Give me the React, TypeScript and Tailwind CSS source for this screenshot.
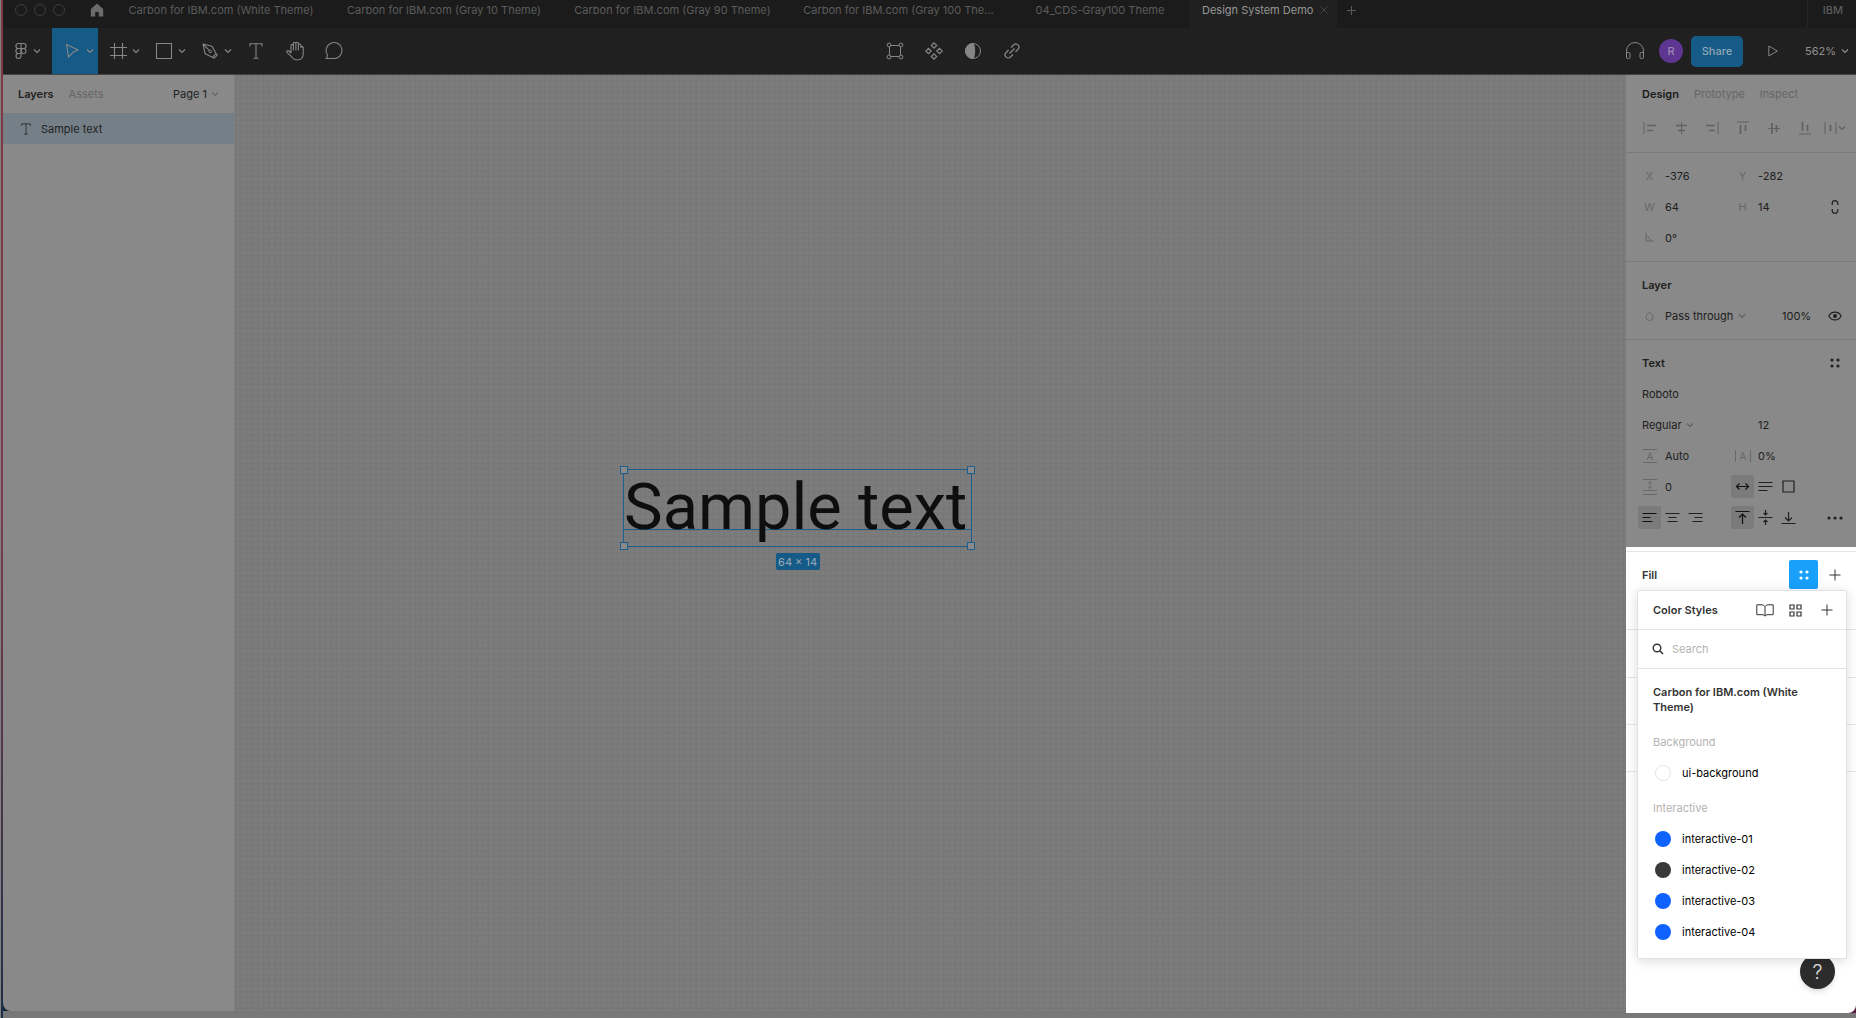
import React, { useState } from "react";

type GlyphProps = { w?: number; h?: number; className?: string; children: React.ReactNode };

function Glyph({ w = 24, h = 24, className = "", children }: GlyphProps) {
  return (
    <svg
      width={w}
      height={h}
      viewBox={`0 0 ${w} ${h}`}
      fill="none"
      stroke="currentColor"
      strokeWidth="1"
      aria-hidden="true"
      className={`shrink-0 ${className}`}
    >
      {children}
    </svg>
  );
}

const Chevron = ({ className = "" }: { className?: string }) => (
  <Glyph w={8} h={6} className={className}>
    <path d="M1 1.5 4 4.5 7 1.5" strokeWidth="1.2" />
  </Glyph>
);

const Plus = ({ className = "" }: { className?: string }) => (
  <Glyph w={12} h={12} className={className}>
    <path d="M6 .5v11M.5 6h11" />
  </Glyph>
);

const FourDots = () => (
  <Glyph w={12} h={12}>
    <g fill="currentColor" stroke="none">
      <circle cx="3" cy="3" r="1.6" />
      <circle cx="9" cy="3" r="1.6" />
      <circle cx="3" cy="9" r="1.6" />
      <circle cx="9" cy="9" r="1.6" />
    </g>
  </Glyph>
);

const TypeIcon = ({ s = 14 }: { s?: number }) => (
  <svg width={s} height={s + 2} viewBox="0 0 14 16" fill="none" stroke="currentColor" aria-hidden="true" className="shrink-0">
    <path d="M1 3.5V.8h12v2.7M7 .8v14.4M4.5 15.2h5" strokeWidth="1.1" />
  </svg>
);

const tabs = [
  { name: "Carbon for IBM.com (White Theme)", box: "w-[218px]" },
  { name: "Carbon for IBM.com (Gray 10 Theme)", box: "w-[228px]" },
  { name: "Carbon for IBM.com (Gray 90 Theme)", box: "w-[229px]" },
  { name: "Carbon for IBM.com (Gray 100 The...", box: "w-[223px]" },
  { name: "04_CDS-Gray100 Theme", box: "w-[180px]" },
];

function TabBar() {
  return (
    <header className="flex h-7 shrink-0 items-start overflow-hidden bg-[#1b1b1b] pl-3 text-[#5c5c5c]">
      <div className="flex h-5 items-center gap-[7px]">
        <button aria-label="Close window" className="size-3 rounded-full border border-[#3d3d3d]" />
        <button aria-label="Minimise window" className="size-3 rounded-full border border-[#3d3d3d]" />
        <button aria-label="Zoom window" className="size-3 rounded-full border border-[#3d3d3d]" />
      </div>
      <button aria-label="Home" className="ml-6 flex h-5 w-4 items-center justify-center text-[#6b6b6b]">
        <Glyph w={14} h={14}>
          <path d="M7 .5 .8 6v7.5h4.4V9h3.6v4.5h4.4V6Z" fill="currentColor" stroke="none" />
        </Glyph>
      </button>
      <nav className="ml-[7px] flex min-w-0" aria-label="Open files">
        {tabs.map((t) => (
          <button key={t.name} className={`h-5 truncate text-center whitespace-nowrap ${t.box}`}>
            {t.name}
          </button>
        ))}
        <div className="flex h-7 w-[147px] items-start bg-[#202020] pr-[3px] pl-3">
          <button className="h-5 flex-1 text-left whitespace-nowrap text-[#969696]">Design System Demo</button>
          <button aria-label="Close tab" className="flex size-5 items-center justify-center text-[#444444]">
            <Glyph w={8} h={8}>
              <path d="M.5 .5l7 7M7.5 .5l-7 7" />
            </Glyph>
          </button>
        </div>
        <button aria-label="New tab" className="ml-1 flex size-5 items-center justify-center text-[#5a5a5a]">
          <Glyph w={9} h={9}>
            <path d="M4.5 0v9M0 4.5h9" />
          </Glyph>
        </button>
      </nav>
      <button className="ml-auto h-7 border-l border-[#242424] pr-[13px] pb-2 pl-[15px] font-medium">IBM</button>
    </header>
  );
}

type ToolProps = { label: string; active?: boolean; menu?: boolean; box?: string; children: React.ReactNode };

function Tool({ label, active, menu = true, box, children }: ToolProps) {
  const size = box ?? (menu ? "w-[46px] justify-center gap-[2px] pl-1" : "w-[39px] justify-center");
  return (
    <button aria-label={label} className={`flex h-full items-center ${size} ${active ? "bg-[#165a87]" : ""}`}>
      {children}
      {menu && <Chevron />}
    </button>
  );
}

function Toolbar() {
  return (
    <div className="flex h-[46px] shrink-0 items-center bg-[#202020] text-[#868686]">
      <div className="flex h-full pl-[3px]">
        <Tool label="Main menu" box="w-[46px] pl-[3px]">
          <Glyph w={24}>
            <g strokeWidth="1.1">
              <path d="M12 4.500H9.400a2.500 2.500 0 0 0 0 5H12ZM12 9.500H9.400a2.500 2.500 0 0 0 0 5H12ZM12 4.500h2.600a2.500 2.500 0 0 1 0 5H12ZM12 14.500H9.400a2.500 2.500 0 1 0 2.600 2.500Z" />
              <circle cx="14.500" cy="12" r="2.500" />
            </g>
          </Glyph>
        </Tool>
        <Tool label="Move" active>
          <Glyph>
            <path d="M6.500 5.500 18 11 13 13.300 8.500 18Z" strokeWidth="1.1" />
          </Glyph>
        </Tool>
        <Tool label="Frame">
          <Glyph>
            <path d="M8.500 4v16M16.500 4v16M4 8.500h17M4 16.500h17" strokeWidth="1.1" />
          </Glyph>
        </Tool>
        <Tool label="Rectangle">
          <Glyph>
            <path d="M4.500 4.500h15v15h-15Z" strokeWidth="1.1" />
          </Glyph>
        </Tool>
        <Tool label="Pen">
          <Glyph>
            <path d="M5 5l9 2.200 4 7.300-3.500 3.800-7.400-3.500ZM5 5l6.500 6.700M17.500 14l1.700 2.200-3 3-2.200-1.500" strokeWidth="1.1" strokeLinejoin="round" />
            <circle cx="12.300" cy="12.500" r="1.300" />
          </Glyph>
        </Tool>
        <Tool label="Text" menu={false}>
          <TypeIcon />
        </Tool>
        <Tool label="Hand" menu={false}>
          <Glyph>
            <path
              d="M8 14V6.600a1.200 1.200 0 0 1 2.400 0V11 4.500a1.200 1.200 0 0 1 2.500 0V11 4.500a1.200 1.200 0 0 1 2.500 0V11 6.200a1.200 1.200 0 0 1 2.500 0V8.500a1.200 1.200 0 0 1 2.300 0V15c0 3.800-2.500 6-5.700 6-3.600 0-4.800-1.500-6.300-3.800L3.800 13.300c-.5-1.300 1.200-2.300 2.200-1.300l2 2"
              strokeWidth="1.1"
              strokeLinejoin="round"
            />
          </Glyph>
        </Tool>
        <Tool label="Comment" menu={false}>
          <Glyph>
            <path d="M4 19.500c1.300-.8 1.700-1.700 1.400-3.500A8 8 0 1 1 12.500 19.500Z" strokeWidth="1.1" strokeLinejoin="round" />
          </Glyph>
        </Tool>
      </div>
      <div className="flex h-full flex-1 items-center justify-center pr-[68px]">
        <Tool label="Edit object" menu={false}>
          <Glyph w={18} h={18}>
            <circle cx="3" cy="3" r="1.900" />
            <circle cx="15" cy="3" r="1.900" />
            <circle cx="3" cy="15" r="1.900" />
            <circle cx="15" cy="15" r="1.900" />
            <path d="M5 3.500h8M5 14.500h8M3.500 5v8M14.500 5v8" />
          </Glyph>
        </Tool>
        <Tool label="Create component" menu={false}>
          <Glyph w={18} h={18}>
            <path d="M9 .8 11.700 3.500 9 6.200 6.300 3.500ZM9 11.800l2.700 2.700L9 17.200l-2.700-2.700ZM3.500 6.300 6.200 9l-2.700 2.700L.8 9ZM14.500 6.300 17.200 9l-2.700 2.700L11.800 9Z" strokeWidth="1.200" />
          </Glyph>
        </Tool>
        <Tool label="Mask" menu={false}>
          <Glyph w={18} h={18}>
            <circle cx="9" cy="9" r="7.500" />
            <path d="M9 1.500a7.500 7.500 0 0 0 0 15c2-2 2.500-12 0-15Z" fill="currentColor" />
          </Glyph>
        </Tool>
        <Tool label="Link" menu={false}>
          <Glyph w={16} h={16}>
            <path
              d="M7 4.500 9.500 2a3 3 0 0 1 4.500 4.300L11.500 9M9 11.500 6.500 14A3 3 0 0 1 2 9.700L4.500 7M5.500 10.500l5-5"
              strokeWidth="1.300"
            />
          </Glyph>
        </Tool>
      </div>
      <div className="flex h-full items-center pr-[7px]">
        <button aria-label="Audio" className="flex w-6 justify-center">
          <Glyph w={20} h={20}>
            <path d="M1.500 17v-7a8.500 8.500 0 0 1 17 0v7" />
            <path d="M1.500 11.500h2.300q1.200 0 1.200 1.200v3.600q0 1.200-1.200 1.200H2.700q-1.200 0-1.200-1.200ZM18.500 11.500h-2.300q-1.200 0-1.200 1.200v3.600q0 1.200 1.200 1.200h1.100q1.200 0 1.200-1.200Z" />
          </Glyph>
        </button>
        <button aria-label="R, your account" className="ml-3 size-6 rounded-full bg-[#5f3592] font-medium text-[#9c8ab4]">
          R
        </button>
        <button className="ml-2 h-[31px] w-[52px] rounded-[5px] bg-[#165a87] font-medium text-[#94a8b6]">Share</button>
        <button aria-label="Present" className="ml-4 flex w-7 justify-center">
          <Glyph w={10} h={12}>
            <path d="M.8 1 9.300 6 .8 11Z" />
          </Glyph>
        </button>
        <button className="ml-[18px] flex items-center gap-[5px] text-[#909090]">
          562%
          <Chevron />
        </button>
      </div>
    </div>
  );
}

function LeftPanel() {
  return (
    <aside className="w-[232px] shrink-0 rounded-bl-lg border-r border-[#828282] bg-[#898989] text-[#222222]">
      <div className="flex h-[39px] items-center border-b border-[#7c7c7c] pl-[15px]">
        <button className="font-semibold">Layers</button>
        <button className="ml-[15px] text-[#666666]">Assets</button>
        <button className="mr-[15px] ml-auto flex items-center gap-1">
          Page 1
          <Chevron className="text-[#666666]" />
        </button>
      </div>
      <button className="flex h-[30px] w-full items-center gap-[10px] bg-[#757f87] pl-[18px]">
        <TypeIcon s={10} />
        Sample text
      </button>
    </aside>
  );
}

const handles = ["-top-1 -left-1", "-top-1 -right-1", "-bottom-1 -left-1", "-right-1 -bottom-1"];

function Canvas() {
  return (
    <main className="relative min-w-0 flex-1 overflow-hidden bg-[#7c7c7c]">
      <svg className="absolute inset-0 h-full w-full" aria-hidden="true">
        <defs>
          <pattern id="pixel-grid" width="5.62" height="5.62" patternUnits="userSpaceOnUse">
            <path d="M.5 0v5.62M0 .5h5.62" stroke="#767676" fill="none" />
          </pattern>
        </defs>
        <rect width="100%" height="100%" fill="url(#pixel-grid)" />
      </svg>
      <div className="absolute top-[42.1%] left-[27.9%] h-[78px] w-[349px] border border-[#1c5f8c]">
        <p className="h-[60px] border-b border-[#1c5f8c] font-[Roboto,sans-serif] text-[65px] leading-[74px] whitespace-nowrap text-[#0e0e0e]">
          Sample text
        </p>
        {handles.map((at) => (
          <span key={at} className={`absolute size-2 border border-[#1c5f8c] bg-[#8a8a8a] ${at}`} />
        ))}
        <span className="absolute top-[83px] left-1/2 flex h-[17px] w-11 -translate-x-1/2 items-center justify-center rounded-[2px] bg-[#165a87] whitespace-nowrap text-[#9aabb7]">
          64 × 14
        </span>
      </div>
    </main>
  );
}

const alignIcons: { label: string; d: string; edge: string }[] = [
  { label: "Align left", d: "M4 4.500h9M4 9.500h6", edge: "M1 1v12" },
  { label: "Align horizontal centres", d: "M2 4.500h11M4 9.500h7", edge: "M7.500 1v12" },
  { label: "Align right", d: "M1 4.500h9M4 9.500h6", edge: "M13 1v12" },
  { label: "Align top", d: "M4.500 4v9M9.500 4v6", edge: "M1 1h12" },
  { label: "Align vertical centres", d: "M5 2v11M9.500 4v7", edge: "M1 7.500h12" },
  { label: "Align bottom", d: "M4.500 1v9M9.500 4v6", edge: "M1 13h12" },
];

function Section({ className = "pb-2", children }: { className?: string; children: React.ReactNode }) {
  return <section className={`border-t border-[#7a7a7a] pt-[7px] pr-[7px] pl-2 ${className}`}>{children}</section>;
}

const Row = ({ children }: { children: React.ReactNode }) => <div className="flex h-[31px] items-center">{children}</div>;

function Field({ label, value, icon }: { label: string; value: string; icon?: React.ReactNode }) {
  return (
    <label className="flex items-center">
      <span className="flex w-[31px] justify-center text-[#686868]">{icon ?? label}</span>
      <input aria-label={label} defaultValue={value} className="w-[62px] bg-transparent outline-none" />
    </label>
  );
}

function Toggle({ label, active, children }: { label: string; active?: boolean; children: React.ReactNode }) {
  return (
    <button
      aria-label={label}
      aria-pressed={!!active}
      className={`flex size-[23px] items-center justify-center rounded-[2px] ${active ? "bg-[#7b7b7b] text-[#111111]" : ""}`}
    >
      <Glyph w={15} h={15}>{children}</Glyph>
    </button>
  );
}

function Picker({ label, value }: { label: string; value: string }) {
  return (
    <span className="flex items-center gap-1">
      <select aria-label={label} className="appearance-none bg-transparent outline-none">
        <option>{value}</option>
      </select>
      <Chevron className="text-[#626262]" />
    </span>
  );
}

const swatches = [
  { name: "interactive-01", color: "bg-[#0f62fe]" },
  { name: "interactive-02", color: "bg-[#393939]" },
  { name: "interactive-03", color: "bg-[#0f62fe]" },
  { name: "interactive-04", color: "bg-[#0f62fe]" },
];

function Swatch({ name, color }: { name: string; color: string }) {
  return (
    <li>
      <button className="flex h-[31px] w-full items-center gap-[11px] pl-[17px] text-black">
        <span className={`size-4 rounded-full ${color}`} />
        {name}
      </button>
    </li>
  );
}

function ColorStyles() {
  return (
    <div
      role="dialog"
      aria-label="Color Styles"
      className="absolute top-[43px] right-[9px] left-[11px] z-20 rounded-[2px] border border-[#e2e2e2] bg-white pb-[11px] text-[#333333] shadow-[0_2px_12px_rgba(0,0,0,0.14)]"
    >
      <div className="flex h-[39px] items-center border-b border-[#e5e5e5] pr-1 pl-[15px]">
        <h2 className="flex-1 font-semibold">Color Styles</h2>
        <button aria-label="Libraries" className="flex w-[31px] justify-center">
          <Glyph w={18} h={13}>
            <path d="M9 2.500C8 1 6.500 .8 5 .8H.8v9.900H6c1.500 0 2.500.5 3 1.500.5-1 1.500-1.500 3-1.500h5.200V.8H13c-1.500 0-3 .2-4 1.700ZM9 2.500V12" />
          </Glyph>
        </button>
        <button aria-label="Show as grid" className="flex w-[31px] justify-center">
          <Glyph w={13} h={13}>
            <path d="M1 1h4v4H1ZM8 1h4v4H8ZM1 8h4v4H1ZM8 8h4v4H8Z" strokeWidth="1.200" />
          </Glyph>
        </button>
        <button aria-label="Create style" className="flex w-[31px] justify-center">
          <Plus />
        </button>
      </div>
      <label className="flex h-[39px] items-center gap-2 border-b border-[#e5e5e5] pl-[14px]">
        <Glyph w={12} h={12}>
          <circle cx="5" cy="5" r="3.800" strokeWidth="1.400" />
          <path d="M7.800 7.800 11 11" strokeWidth="1.600" />
        </Glyph>
        <input type="search" aria-label="Search styles" placeholder="Search" className="min-w-0 flex-1 outline-none placeholder:text-[#b3b3b3]" />
      </label>
      <h3 className="px-[15px] pt-4 pb-[11px] leading-[15px] font-semibold">Carbon for IBM.com (White Theme)</h3>
      <h4 className="flex h-[31px] items-center px-[15px] text-[#b3b3b3]">Background</h4>
      <ul>
        <Swatch name="ui-background" color="border border-[#e5e5e5] bg-white" />
      </ul>
      <h4 className="mt-1 flex h-[31px] items-center px-[15px] text-[#b3b3b3]">Interactive</h4>
      <ul>
        {swatches.map((s) => (
          <Swatch key={s.name} {...s} />
        ))}
      </ul>
    </div>
  );
}

function RightPanel() {
  const [open, setOpen] = useState(true);
  return (
    <aside className="flex w-[230px] shrink-0 flex-col bg-[#5b1c42]">
      <div className="bg-[#898989] text-[#202020]">
        <div className="flex h-[38px] items-center gap-[15px] pl-4">
          <button className="font-semibold text-[#1c1c1c]">Design</button>
          <button className="text-[#666666]">Prototype</button>
          <button className="text-[#666666]">Inspect</button>
        </div>
        <div className="flex h-[39px] items-center pb-[9px] pl-2 text-[#616161]">
          {alignIcons.map((a) => (
            <button key={a.label} aria-label={a.label} className="flex w-[31px] justify-center">
              <Glyph w={14} h={14}>
                <path d={a.edge} />
                <path d={a.d} strokeWidth="1.700" />
              </Glyph>
            </button>
          ))}
          <button aria-label="Distribute" className="flex w-[29px] items-center justify-center gap-[1px]">
            <Glyph w={13} h={14}>
              <path d="M1 1v12M12 1v12" />
              <path d="M6.500 4v6" strokeWidth="1.700" />
            </Glyph>
            <Chevron />
          </button>
        </div>

        <Section>
          <Row>
            <Field label="X" value="-376" />
            <Field label="Y" value="-282" />
          </Row>
          <Row>
            <Field label="W" value="64" />
            <Field label="H" value="14" />
            <button aria-label="Constrain proportions" className="flex w-[29px] justify-center">
              <Glyph w={8} h={14}>
                <path d="M1.200 5V3.500a2.800 2.800 0 0 1 5.600 0V5M1.200 9v1.500a2.800 2.800 0 0 0 5.600 0V9" strokeWidth="1.200" />
              </Glyph>
            </button>
          </Row>
          <Row>
            <Field
              label="Rotation"
              value="0°"
              icon={
                <Glyph w={9} h={9}>
                  <path d="M1 0v8h8M1 3.500A4.500 4.500 0 0 1 5.500 8" />
                </Glyph>
              }
            />
          </Row>
        </Section>

        <Section>
          <Row>
            <h2 className="pl-2 font-semibold">Layer</h2>
          </Row>
          <Row>
            <span className="flex w-[31px] justify-center text-[#666666]">
              <Glyph w={9} h={10}>
                <path d="M4.500 .8C3 2.500 1 4 1 6a3.500 3.500 0 0 0 7 0C8 4 6 2.500 4.500 .8Z" />
              </Glyph>
            </span>
            <span className="w-[117px]">
              <Picker label="Blend mode" value="Pass through" />
            </span>
            <input aria-label="Opacity" defaultValue="100%" className="w-[38px] bg-transparent outline-none" />
            <button aria-label="Hide layer" className="flex w-[29px] justify-center">
              <Glyph w={14} h={10}>
                <path d="M.8 5C3.500-.2 10.500-.2 13.200 5 10.500 10.200 3.500 10.200 .8 5Z" strokeWidth="1.100" />
                <circle cx="7" cy="5" r="2" fill="currentColor" stroke="none" />
              </Glyph>
            </button>
          </Row>
        </Section>

        <Section className="pb-[14px]">
          <Row>
            <h2 className="flex-1 pl-2 font-semibold">Text</h2>
            <button aria-label="Text styles" className="flex w-[29px] justify-center">
              <FourDots />
            </button>
          </Row>
          <Row>
            <input aria-label="Font family" defaultValue="Roboto" className="ml-2 w-40 bg-transparent outline-none" />
          </Row>
          <Row>
            <span className="w-[116px] pl-2">
              <Picker label="Font weight" value="Regular" />
            </span>
            <input aria-label="Font size" defaultValue="12" className="ml-2 w-14 bg-transparent outline-none" />
          </Row>
          <Row>
            <Field
              label="Line height"
              value="Auto"
              icon={
                <Glyph w={14} h={14}>
                  <path d="M0 .5h14M0 13.500h14M4.200 11 7 3.500 9.800 11M5 8.500h4" />
                </Glyph>
              }
            />
            <Field
              label="Letter spacing"
              value="0%"
              icon={
                <Glyph w={16} h={14}>
                  <path d="M.5 1v12M15.500 1v12M5.200 11 8 3.500 10.800 11M6 8.500h4" />
                </Glyph>
              }
            />
          </Row>
          <Row>
            <Field
              label="Paragraph spacing"
              value="0"
              icon={
                <Glyph w={14} h={16}>
                  <path d="M0 .5h14M0 11.500h14M0 15.500h14M7 2.500v7M5 4.500l2-2 2 2M5 7.500l2 2 2-2" />
                </Glyph>
              }
            />
            <div className="ml-1 flex">
              <Toggle label="Auto width" active>
                <path d="M1.500 7.500h12M4.500 4.500l-3 3 3 3M10.500 4.500l3 3-3 3" strokeWidth="1.200" />
              </Toggle>
              <Toggle label="Auto height">
                <path d="M.5 3.500h14M.5 7.500h14M.5 11.500h9" strokeWidth="1.200" />
              </Toggle>
              <Toggle label="Fixed size">
                <path d="M2 2h11v11H2Z" strokeWidth="1.200" />
              </Toggle>
            </div>
          </Row>
          <Row>
            <div className="ml-1 flex w-[93px]">
              <Toggle label="Align text left" active>
                <path d="M.5 3.500h14M.5 7.500h8M.5 11.500h10" strokeWidth="1.200" />
              </Toggle>
              <Toggle label="Align text centre">
                <path d="M.5 3.500h14M3.500 7.500h8M2.500 11.500h10" strokeWidth="1.200" />
              </Toggle>
              <Toggle label="Align text right">
                <path d="M.5 3.500h14M6.500 7.500h8M4.500 11.500h10" strokeWidth="1.200" />
              </Toggle>
            </div>
            <div className="flex w-[89px]">
              <Toggle label="Align text top" active>
                <path d="M.5 1.500h14M7.500 14V4M4 7.500 7.500 4 11 7.500" strokeWidth="1.200" />
              </Toggle>
              <Toggle label="Align text middle">
                <path d="M.5 7.500h14M7.500 0v5M5.500 3l2 2 2-2M7.500 15v-5M5.500 12l2-2 2 2" strokeWidth="1.200" />
              </Toggle>
              <Toggle label="Align text bottom">
                <path d="M.5 13.500h14M7.500 2v9M4 7.500 7.500 11 11 7.500" strokeWidth="1.200" />
              </Toggle>
            </div>
            <button aria-label="More type settings" className="flex w-[29px] justify-center">
              <Glyph w={16} h={4}>
                <g fill="currentColor" stroke="none">
                  <circle cx="2" cy="2" r="1.600" />
                  <circle cx="8" cy="2" r="1.600" />
                  <circle cx="14" cy="2" r="1.600" />
                </g>
              </Glyph>
            </button>
          </Row>
        </Section>
      </div>

      <div className="relative flex-1 rounded-br-lg bg-white pt-1">
        <div className="h-[78px] border-t border-[#e5e5e5] pt-[7px] pl-2 text-[#333333]">
          <div className="flex h-[31px] items-center pr-[7px]">
            <h2 className="flex-1 pl-2 font-semibold">Fill</h2>
            <button
              aria-label="Fill styles"
              aria-expanded={open}
              onClick={() => setOpen(!open)}
              className="flex h-[29px] w-[29px] items-center justify-center rounded-[2px] bg-[#18a0fb] text-white"
            >
              <FourDots />
            </button>
            <button aria-label="Add fill" className="ml-[2px] flex w-[29px] justify-center">
              <Plus />
            </button>
          </div>
        </div>
        <div className="h-12 border-t border-[#e5e5e5]" />
        <div className="h-[47px] border-t border-[#e5e5e5]" />
        <div className="h-[47px] border-t border-[#e5e5e5]" />
        <div className="border-t border-[#e5e5e5]" />
        {open && <ColorStyles />}
        <button
          aria-label="Help"
          className="absolute right-[21px] bottom-6 z-10 flex size-[35px] items-center justify-center rounded-full bg-[#2c2c2c] text-xl font-light text-[#e0e0e0] shadow-md"
        >
          ?
        </button>
      </div>
    </aside>
  );
}

export default function App() {
  return (
    <div className="flex min-h-screen flex-col bg-[#787878] font-[Inter,sans-serif] text-[11px] leading-4">
      <div className="flex flex-1">
        <div className="w-[3px] shrink-0 border-l border-[#808080] bg-gradient-to-b from-[#7d3a42] via-[#7c3c4e] to-[#1b2f47]" />
        <div className="flex min-w-0 flex-1 flex-col">
          <TabBar />
          <Toolbar />
          <div className="flex flex-1 border-t border-[#444444]">
            <div className="mb-[7px] flex bg-[#14283c]">
              <LeftPanel />
            </div>
            <div className="mb-[7px] flex min-w-0 flex-1">
              <Canvas />
            </div>
            <div className="mb-[5px] flex">
              <RightPanel />
            </div>
          </div>
        </div>
      </div>
    </div>
  );
}
